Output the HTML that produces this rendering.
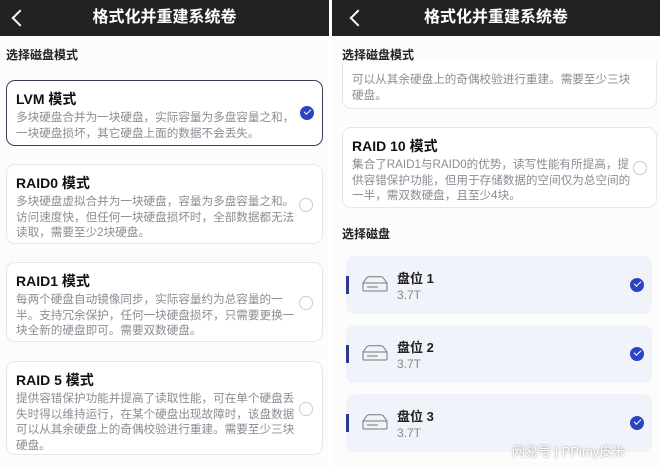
<!DOCTYPE html><html><head><meta charset="utf-8"><style>
body{margin:0;width:660px;height:468px;background:#fff;position:relative;overflow:hidden;font-family:"Liberation Sans","Noto Sans CJK SC",sans-serif}
.p{position:absolute;top:0;height:468px;background:#fcfcfd}
.hd{position:absolute;left:0;right:0;top:0;height:36px;background:#222;color:#fff;font-size:16px;font-weight:bold;text-align:center;line-height:36px}
.bk{position:absolute;left:14px;top:12px;width:10px;height:10px;border-left:2px solid #fff;border-bottom:2px solid #fff;transform:rotate(45deg);transform-origin:center}
.lb{position:absolute;font-size:12px;font-weight:bold;color:#222}
.c{position:absolute;background:#fff;border:1px solid #e6e7ea;border-radius:9px;box-sizing:border-box}
.c.sel{border:1.5px solid #3b4054}
.t{position:absolute;left:9px;top:8px;font-size:14px;font-weight:bold;color:#111}
.d{position:absolute;left:9px;top:29px;width:281px;font-size:11.6px;line-height:15.5px;color:#8a8d94}
.r{position:absolute;right:9px;width:12px;height:12px;border:1px solid #ccc;border-radius:50%}
.ck{position:absolute;width:14px;height:14px;border-radius:50%;background:#2c44c4}
.ck:after{content:"";position:absolute;left:4px;top:3px;width:6px;height:3px;border-left:1.5px solid #fff;border-bottom:1.5px solid #fff;transform:rotate(-45deg)}
.dk{position:absolute;left:346px;width:306px;height:58px;background:#f1f3fa;border-radius:8px}
.bar{position:absolute;left:0;top:20px;width:3px;height:18px;background:#2a3a90}
.ic{position:absolute;left:16px;top:20px}
.n{position:absolute;left:51px;top:12px;font-size:13px;font-weight:bold;color:#222}
.s{position:absolute;left:51px;top:32px;font-size:12px;color:#888}
</style></head><body>
<div class="p" style="left:0;width:329px">
<div class="hd"><span class="bk"></span>格式化并重建系统卷</div>
<div class="lb" style="left:6px;top:46px">选择磁盘模式</div>
<div class="c sel" style="left:6px;top:80px;width:317px;height:66px"><div class="t">LVM 模式</div><div class="d">多块硬盘合并为一块硬盘，实际容量为多盘容量之和，一块硬盘损坏，其它硬盘上面的数据不会丢失。</div><div class="ck" style="right:8px;top:25px"></div></div>
<div class="c" style="left:6px;top:164px;width:317px;height:80px"><div class="t">RAID0 模式</div><div class="d">多块硬盘虚拟合并为一块硬盘，容量为多盘容量之和。访问速度快，但任何一块硬盘损坏时，全部数据都无法读取，需要至少2块硬盘。</div><div class="r" style="top:33px"></div></div>
<div class="c" style="left:6px;top:262px;width:317px;height:80px"><div class="t">RAID1 模式</div><div class="d">每两个硬盘自动镜像同步，实际容量约为总容量的一半。支持冗余保护，任何一块硬盘损坏，只需要更换一块全新的硬盘即可。需要双数硬盘。</div><div class="r" style="top:33px"></div></div>
<div class="c" style="left:6px;top:361px;width:317px;height:94px"><div class="t">RAID 5 模式</div><div class="d">提供容错保护功能并提高了读取性能，可在单个硬盘丢失时得以维持运行，在某个硬盘出现故障时，该盘数据可以从其余硬盘上的奇偶校验进行重建。需要至少三块硬盘。</div><div class="r" style="top:40px"></div></div>
</div>
<div class="p" style="left:332px;width:328px">
<div class="hd"><span class="bk" style="left:20px"></span>格式化并重建系统卷</div>
<div class="lb" style="left:10px;top:46px">选择磁盘模式</div>
<div class="c" style="left:10px;top:62px;width:315px;height:47px;border-top:none;border-radius:0 0 9px 9px"><div class="d" style="top:10px">可以从其余硬盘上的奇偶校验进行重建。需要至少三块硬盘。</div></div>
<div class="c" style="left:10px;top:127px;width:315px;height:81px"><div class="t">RAID 10 模式</div><div class="d">集合了RAID1与RAID0的优势，读写性能有所提高，提供容错保护功能，但用于存储数据的空间仅为总空间的一半，需双数硬盘，且至少4块。</div><div class="r" style="top:33px"></div></div>
<div class="lb" style="left:10px;top:225px">选择磁盘</div>
</div>
<svg width="0" height="0" style="position:absolute"><defs><g id="hd"><path d="M1 7 L5 1.5 Q6 0.8 7 0.8 H19 Q20 0.8 21 1.5 L25 7 V14 Q25 15 24 15 H2 Q1 15 1 14 Z M1 7 H25 M5 11 H16" fill="none" stroke="#777" stroke-width="1"/></g></defs></svg>
<div class="dk" style="top:256px"><div class="bar"></div><svg class="ic" width="26" height="16"><use href="#hd"/></svg><div class="n">盘位 1</div><div class="s">3.7T</div><div class="ck" style="right:8px;top:22px"></div></div>
<div class="dk" style="top:325px"><div class="bar"></div><svg class="ic" width="26" height="16"><use href="#hd"/></svg><div class="n">盘位 2</div><div class="s">3.7T</div><div class="ck" style="right:8px;top:22px"></div></div>
<div class="dk" style="top:394px"><div class="bar"></div><svg class="ic" width="26" height="16"><use href="#hd"/></svg><div class="n">盘位 3</div><div class="s">3.7T</div><div class="ck" style="right:8px;top:22px"></div></div>
<div style="position:absolute;left:512px;top:441px;font-size:13px;color:#fff;text-shadow:0 0 2px #888">网易号 | PPimy皮米</div>
</body></html>
